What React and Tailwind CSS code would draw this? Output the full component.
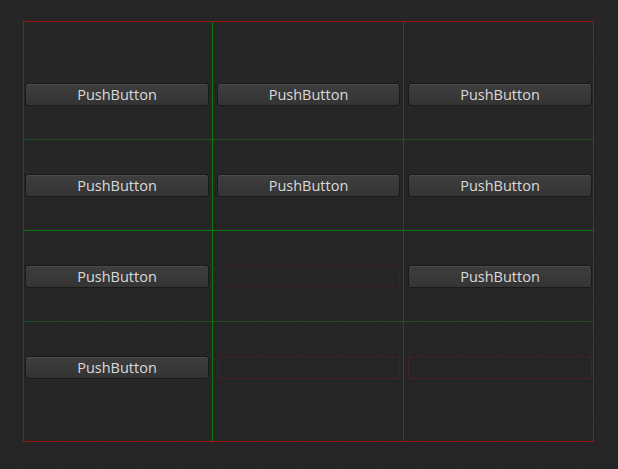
import React from 'react';

const font = { fontFamily: '"Open Sans", "Noto Sans", sans-serif' };

const PushButton = ({ wide }) => (
  <button
    className={
      'block h-[23px] pt-px rounded-[3px] border border-[#1a1a1a] bg-gradient-to-b from-[#3e3e3e] to-[#343434] text-[14.5px] leading-none text-[#dadada] shadow-[inset_0_1px_0_rgba(255,255,255,0.07)] ' +
      (wide ? 'w-[184px]' : 'w-[183px]')
    }
    style={font}
  >
    PushButton
  </button>
);

const Slot = ({ wide, dim }) => (
  <div
    className={
      'h-[23px] border ' +
      (dim ? 'border-[#362323] ' : 'border-[#4a1f1f] ') +
      (wide ? 'w-[184px]' : 'w-[183px]')
    }
  />
);

export default function App() {
  return (
    <div className="w-[618px] h-[469px] bg-[#262626] bg-[image:radial-gradient(circle,#1c1c1c_0.6px,transparent_0.9px)] bg-[size:10px_10px] pt-[21px] pl-[23px]">
      <div className="grid w-[571px] h-[421px] border border-[#9c1414] grid-cols-[188px_1px_190px_1px_189px] grid-rows-[117px_1px_90px_1px_90px_1px_119px]">
        {/* row 1 */}
        <div className="flex items-start col-start-1 row-start-1 pt-[61px] pl-[1px]"><PushButton wide /></div>
        <div className="flex items-start col-start-3 row-start-1 pt-[61px] pl-[4px]"><PushButton /></div>
        <div className="flex items-start col-start-5 row-start-1 pt-[61px] pl-[4px]"><PushButton wide /></div>

        {/* row 2 */}
        <div className="flex items-start col-start-1 row-start-3 pt-[34px] pl-[1px]"><PushButton wide /></div>
        <div className="flex items-start col-start-3 row-start-3 pt-[34px] pl-[4px]"><PushButton /></div>
        <div className="flex items-start col-start-5 row-start-3 pt-[34px] pl-[4px]"><PushButton wide /></div>

        {/* row 3 */}
        <div className="flex items-start col-start-1 row-start-5 pt-[34px] pl-[1px]"><PushButton wide /></div>
        <div className="flex items-start col-start-3 row-start-5 pt-[34px] pl-[4px]"><Slot dim /></div>
        <div className="flex items-start col-start-5 row-start-5 pt-[34px] pl-[4px]"><PushButton wide /></div>

        {/* row 4 */}
        <div className="flex items-start col-start-1 row-start-7 pt-[34px] pl-[1px]"><PushButton wide /></div>
        <div className="flex items-start col-start-3 row-start-7 pt-[34px] pl-[4px]"><Slot /></div>
        <div className="flex items-start col-start-5 row-start-7 pt-[34px] pl-[4px]"><Slot wide /></div>

        {/* grid guides */}
        <div className="col-[1/-1] row-start-2 bg-[#22502a]" />
        <div className="col-[1/-1] row-start-4 bg-[#0b7a0b]" />
        <div className="col-[1/-1] row-start-6 bg-[#22502a]" />
        <div className="col-start-2 row-[1/-1] bg-[#0b7a0b]" />
        <div className="col-start-4 row-[1/-1] bg-[#22502a]" />
      </div>
    </div>
  );
}
